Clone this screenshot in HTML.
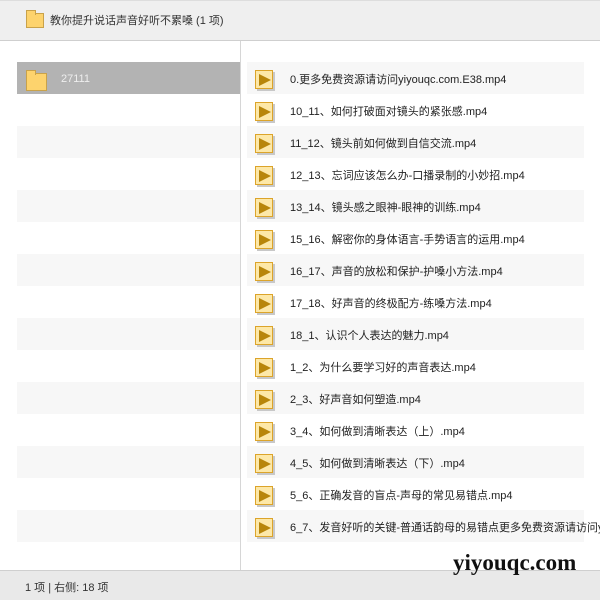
<!DOCTYPE html>
<html><head><meta charset="utf-8"><style>
*{margin:0;padding:0;box-sizing:border-box}
body{width:600px;height:600px;overflow:hidden;background:#fff;font-family:"Liberation Sans","Noto Sans CJK SC",sans-serif;font-size:11px;color:#222;position:relative}
.hdr{position:absolute;left:0;top:0;width:600px;height:41px;background:#efefef;border-bottom:1px solid #cfcfcf;border-top:1px solid #ddd}
.hdr span{position:absolute;left:50px;top:11px;font-size:11px;color:#333}
.fold{position:absolute;width:18px;height:15px;background:#fdd36d;border:1px solid #c9a24a}
.fold:before{content:"";position:absolute;left:-1px;top:-4px;width:8px;height:4px;background:#fdd36d;border:1px solid #c9a24a;border-bottom:none}
.div{position:absolute;left:240px;top:41px;width:1px;height:529px;background:#d6d6d6}
.lrow{position:absolute;left:17px;width:223px;height:32px;background:#f7f7f7}
.sel{background:#b3b3b3}
.rrow{position:absolute;left:247px;width:337px;height:32px}
.rrow.s{background:#f7f7f7}
.ic{position:absolute;left:8px;top:8px;width:18px;height:19px;background:#fde8a8;border:1px solid #dca42a;box-shadow:2px 2px 0 #c8c8c8}
.ic:after{content:"";position:absolute;left:3px;top:3px;border-left:12px solid #b8860b;border-top:6px solid transparent;border-bottom:6px solid transparent}
.rrow span{position:absolute;left:43px;top:9px;white-space:nowrap;font-size:11px;color:#222}
.ftr{position:absolute;left:0;top:570px;width:600px;height:30px;background:#e9e9e9;border-top:1px solid #cfcfcf}
.ftr span{position:absolute;left:25px;top:8px;font-size:11px;color:#333}
.wm{position:absolute;left:453px;top:550px;font-family:"Liberation Serif",serif;font-weight:bold;font-size:23px;color:#111}
.clip{position:absolute;left:241px;top:41px;width:359px;height:529px;overflow:hidden}
</style></head><body>
<div class="hdr"><div class="fold" style="left:26px;top:12px"></div><span>教你提升说话声音好听不累嗓 (1 项)</span></div>
<div class="lrow sel" style="top:62px"><div class="fold" style="left:9px;top:11px;width:21px;height:18px"></div><span style="position:absolute;left:44px;top:11px;color:#eee">27111</span></div>
<div class="lrow" style="top:126px"></div><div class="lrow" style="top:190px"></div><div class="lrow" style="top:254px"></div><div class="lrow" style="top:318px"></div><div class="lrow" style="top:382px"></div><div class="lrow" style="top:446px"></div><div class="lrow" style="top:510px"></div>
<div class="div"></div>
<div class="clip"><div style="position:absolute;left:-241px;top:-41px;width:600px;height:600px">
<div class="rrow s" style="top:62px"><div class="ic"></div><span>0.更多免费资源请访问yiyouqc.com.E38.mp4</span></div>
<div class="rrow" style="top:94px"><div class="ic"></div><span>10_11、如何打破面对镜头的紧张感.mp4</span></div>
<div class="rrow s" style="top:126px"><div class="ic"></div><span>11_12、镜头前如何做到自信交流.mp4</span></div>
<div class="rrow" style="top:158px"><div class="ic"></div><span>12_13、忘词应该怎么办-口播录制的小妙招.mp4</span></div>
<div class="rrow s" style="top:190px"><div class="ic"></div><span>13_14、镜头感之眼神-眼神的训练.mp4</span></div>
<div class="rrow" style="top:222px"><div class="ic"></div><span>15_16、解密你的身体语言-手势语言的运用.mp4</span></div>
<div class="rrow s" style="top:254px"><div class="ic"></div><span>16_17、声音的放松和保护-护嗓小方法.mp4</span></div>
<div class="rrow" style="top:286px"><div class="ic"></div><span>17_18、好声音的终极配方-练嗓方法.mp4</span></div>
<div class="rrow s" style="top:318px"><div class="ic"></div><span>18_1、认识个人表达的魅力.mp4</span></div>
<div class="rrow" style="top:350px"><div class="ic"></div><span>1_2、为什么要学习好的声音表达.mp4</span></div>
<div class="rrow s" style="top:382px"><div class="ic"></div><span>2_3、好声音如何塑造.mp4</span></div>
<div class="rrow" style="top:414px"><div class="ic"></div><span>3_4、如何做到清晰表达（上）.mp4</span></div>
<div class="rrow s" style="top:446px"><div class="ic"></div><span>4_5、如何做到清晰表达（下）.mp4</span></div>
<div class="rrow" style="top:478px"><div class="ic"></div><span>5_6、正确发音的盲点-声母的常见易错点.mp4</span></div>
<div class="rrow s" style="top:510px"><div class="ic"></div><span>6_7、发音好听的关键-普通话韵母的易错点更多免费资源请访问yiyouqc.com</span></div>
</div></div>
<div class="ftr"><span>1 项 | 右侧: 18 项</span></div>
<div class="wm">yiyouqc.com</div>
</body></html>
